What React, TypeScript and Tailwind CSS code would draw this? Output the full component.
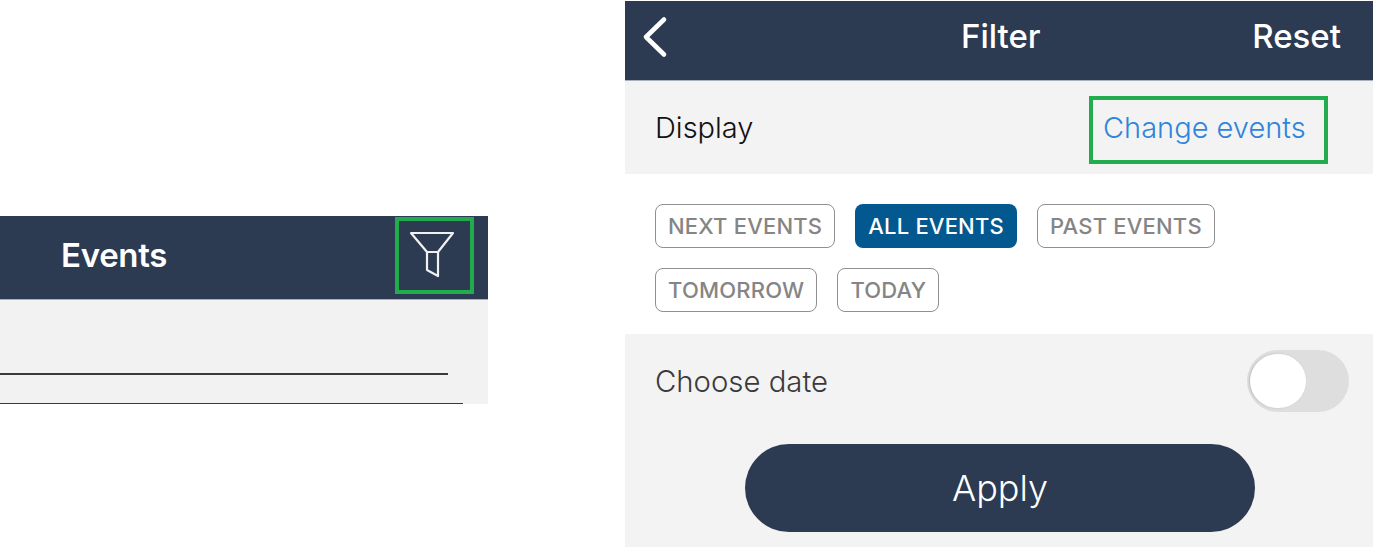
const chipRows = [
  ["NEXT EVENTS", "ALL EVENTS", "PAST EVENTS"],
  ["TOMORROW", "TODAY"],
];

const Chip = ({ label }: { label: string }) => {
  const active = label === "ALL EVENTS";
  return (
    <div
      className={
        active
          ? "h-11 px-[13px] flex items-center rounded-lg bg-[#02588f] text-white text-[22px] font-medium tracking-[0.2px]"
          : "h-11 px-3 flex items-center rounded-lg border border-[#8f8f8f] text-[#858585] text-[22px] font-medium tracking-[0.2px]"
      }
    >
      {label}
    </div>
  );
};

const EventsPanel = () => (
  <div className="w-[488px] pt-[216px] shrink-0">
    <header className="h-[84px] bg-[#2c3a52] border-b border-[#a9b0b8] flex items-start justify-between">
      <span className="ml-[61px] mt-[18px] text-[33px] leading-[42px] font-semibold tracking-[-0.3px] text-white">
        Events
      </span>
      <div className="mr-[14px] mt-px w-[79px] h-[77px] border-4 border-[#22ac4e]">
        {/* funnel */}
        <svg width="71" height="69" viewBox="0 0 71 69" fill="none" stroke="#f1f1f1" strokeWidth="2.2" strokeLinejoin="round" strokeLinecap="round">
          <path d="M12 12H54L39 31H28Z" />
          <path d="M28 31V49L39 55V31" />
        </svg>
      </div>
    </header>
    <div className="h-[104px] bg-[#f3f2f2] flex flex-col">
      <div className="mt-[73px] w-[448px] h-0.5 bg-[#3a3a3a]" />
      <div className="mt-7 w-[463px] h-px bg-[#3a3a3a]" />
    </div>
  </div>
);

const FilterPanel = () => (
  <div className="ml-[137px] mt-px w-[748px] flex flex-col">
    <header className="h-20 bg-[#2c3a52] border-b border-[#a9b0b8] flex items-start justify-between relative">
      <svg className="ml-[14px] mt-[12px]" width="32" height="48" viewBox="0 0 32 48" fill="none" stroke="white" strokeWidth="4.6" strokeLinecap="round" strokeLinejoin="round">
        <path d="M25 6.500L7 24l18 17.500" />
      </svg>
      <span className="absolute left-[336px] top-[12px] text-[33px] leading-[46px] font-medium text-white">
        Filter
      </span>
      <span className="mr-8 mt-3 text-[33px] leading-[46px] font-medium text-white">Reset</span>
    </header>
    <div className="h-[93px] bg-[#f3f3f3] flex items-center justify-between pl-[30px] pr-[45px]">
      <span className="text-[29px] font-light text-[#111111]">Display</span>
      <div className="self-start mt-[15px] w-[239px] h-[68px] border-4 border-[#22ac4e] flex items-center pl-[10px] pb-1">
        <span className="text-[29px] font-light text-[#2f84dc]">Change events</span>
      </div>
    </div>
    <div className="h-[160px] bg-white pt-[30px] pl-[30px] flex flex-col gap-5">
      {chipRows.map((row) => (
        <div key={row[0]} className="flex gap-5">
          {row.map((label) => (
            <Chip key={label} label={label} />
          ))}
        </div>
      ))}
    </div>
    <div className="h-[213px] bg-[#f3f3f3] flex flex-col">
      <div className="h-[110px] pl-[30px] pr-6 pt-4 flex items-start justify-between">
        <span className="mt-3 text-[29.300px] font-light leading-10 text-[#3a3a3a]">Choose date</span>
        <div className="w-[102px] h-[62px] rounded-full bg-[#dedede] flex items-center pl-[3px]">
          <div className="w-[56px] h-[54px] rounded-full bg-white shadow-[-1px_0_2px_#bdbdbd]" />
        </div>
      </div>
      <div className="ml-[120px] w-[510px] h-[88px] rounded-full bg-[#2c3a52] flex items-center justify-center text-[36px] font-light text-white">
        Apply
      </div>
    </div>
  </div>
);

export default function App() {
  return (
    <div className="flex w-[1373px] h-[547px] bg-white overflow-hidden font-['Inter',sans-serif]">
      <EventsPanel />
      <FilterPanel />
    </div>
  );
}
